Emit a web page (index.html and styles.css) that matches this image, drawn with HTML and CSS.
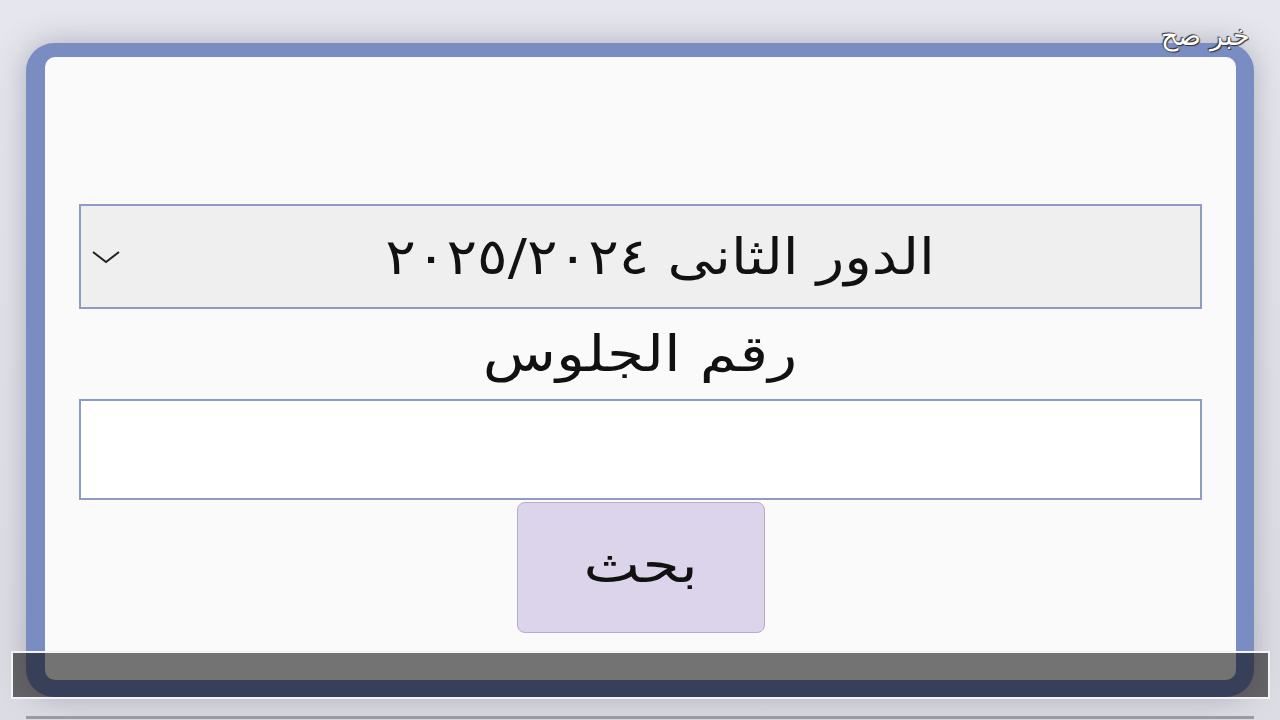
FILE: index.html
```html
<!DOCTYPE html>
<html lang="ar" dir="rtl">
<head>
  <meta charset="UTF-8">
  <title>نتيجة الدور الثانى</title>
  <link rel="stylesheet" href="styles.css">
</head>
<body>

  <div class="brand">خبر صح</div>

  <div class="frame">
    <main class="panel">
      <div class="select">
        <span class="select-text">الدور الثانى ٢٠٢٥/٢٠٢٤</span>
        <svg class="chevron" width="28" height="14" viewBox="0 0 28 14">
          <polyline points="1,2 14,12 27,2" fill="none" stroke="#222" stroke-width="2"/>
        </svg>
      </div>

      <label class="field-label" for="seat"><span>رقم الجلوس</span></label>
      <input class="field" id="seat" type="text">

      <button class="search-btn"><span>بحث</span></button>
    </main>
  </div>

  <div class="strip"></div>

  <!-- dim bar laid over the bottom of the card -->
  <div class="overlay"></div>

</body>
</html>
```

FILE: styles.css
```css
body {
  margin: 0;
  height: 720px;
  overflow: hidden;
  font-family: "DejaVu Sans", "Noto Sans", sans-serif;
  background: linear-gradient(#e6e6ee, #dcdce4);
  position: relative;
}

.brand {
  position: absolute;
  top: 20px;
  right: 30px;
  font-size: 27px;
  font-weight: 300;
  color: #fff;
  text-shadow: 0 0 1px #222, 1px 1px 1px #333, -1px -1px 1px #333;
  z-index: 3;
}

.frame {
  margin: 43px 26px 0;
  height: 654px;
  box-sizing: border-box;
  padding: 14px 18px 17px 19px;
  background: #7a8dc2;
  border-radius: 28px;
  box-shadow: 0 0 30px rgba(110, 110, 130, 0.45);
}

.panel {
  height: 100%;
  box-sizing: border-box;
  background: #fafafa;
  border-radius: 10px;
  padding: 147px 34px 0;
  display: flex;
  flex-direction: column;
  align-items: center;
}

.select {
  width: 100%;
  height: 105px;
  box-sizing: border-box;
  background: #efefef;
  border: 2px solid #8e9bc2;
  display: flex;
  align-items: center;
  justify-content: center;
  position: relative;
  padding-left: 40px;
}

.select-text {
  display: inline-block;
  font-size: 50px;
  color: #111;
  transform: scaleX(1.14);
}

.chevron {
  position: absolute;
  left: 11px;
  top: 44px;
}

.field-label {
  height: 90px;
  display: flex;
  align-items: center;
  font-size: 50px;
  color: #111;
}

.field-label span,
.search-btn span {
  display: inline-block;
  transform: scaleX(1.2);
}

.field {
  width: 100%;
  height: 101px;
  box-sizing: border-box;
  border: 2px solid #8e9bc2;
  background: #fff;
  margin: 0;
}

.search-btn {
  margin-top: 2px;
  width: 248px;
  height: 131px;
  padding-bottom: 6px;
  background: #dcd4ea;
  border: 1px solid #b3abc8;
  border-radius: 8px;
  font-family: inherit;
  font-size: 50px;
  color: #111;
  cursor: pointer;
}

.strip {
  margin: 19px 26px 0;
  height: 3px;
  background: #9a9aa2;
}

.overlay {
  position: absolute;
  left: 11px;
  top: 651px;
  width: 1259px;
  height: 48px;
  box-sizing: border-box;
  background: rgba(0, 0, 0, 0.54);
  border: 2px solid #f4f4f8;
}
```
